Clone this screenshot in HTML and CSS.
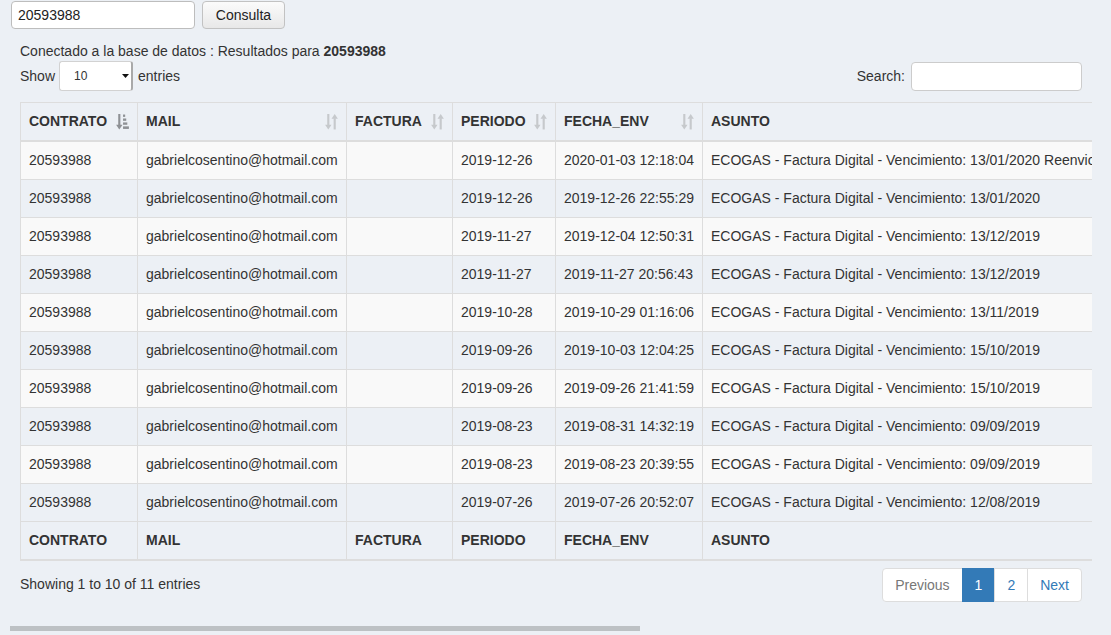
FILE: index.html
```html
<!DOCTYPE html>
<html lang="es">
<head>
<meta charset="utf-8">
<title>Consulta</title>
<link rel="stylesheet" href="styles.css">
</head>
<body>
<form class="topbar">
  <input class="query" type="text" value="20593988">
  <button class="btn" type="button">Consulta</button>
</form>
<div class="wrap">
  <div class="status">Conectado a la base de datos : Resultados para <b>20593988</b></div>
  <div class="controls">
    <div class="length">Show
      <span class="select"><span class="select-val">10</span><span class="select-arrow"><svg width="7" height="4" viewBox="0 0 7 4"><path d="M0 0h7L3.5 4z" fill="#111"/></svg></span></span>
      entries</div>
    <div class="filter">Search: <input class="search" type="text"></div>
  </div>
  <table class="grid">
    <colgroup>
      <col class="c1"><col class="c2"><col class="c3"><col class="c4"><col class="c5"><col class="c6">
    </colgroup>
    <thead>
      <tr>
        <th class="sortable">CONTRATO<svg class="sort asc" width="13" height="16" viewBox="0 0 12 15"><rect x="2" y="0" width="2" height="10.5"/><path d="M0 10h6l-3 4.5z"/><rect x="6.5" y="0.5" width="2" height="2.2"/><rect x="6.5" y="4.2" width="3" height="2.2"/><rect x="6.5" y="7.9" width="4" height="2.2"/><rect x="6.5" y="11.6" width="5.5" height="2.4"/></svg></th>
        <th class="sortable">MAIL<svg class="sort" width="13" height="16" viewBox="0 0 12 15"><rect x="2" y="0" width="2" height="10.5"/><path d="M0 10h6l-3 4.5z"/><path d="M6 4.5h6L9 0z"/><rect x="8" y="4" width="2" height="10.5"/></svg></th>
        <th class="sortable">FACTURA<svg class="sort" width="13" height="16" viewBox="0 0 12 15"><rect x="2" y="0" width="2" height="10.5"/><path d="M0 10h6l-3 4.5z"/><path d="M6 4.5h6L9 0z"/><rect x="8" y="4" width="2" height="10.5"/></svg></th>
        <th class="sortable">PERIODO<svg class="sort" width="13" height="16" viewBox="0 0 12 15"><rect x="2" y="0" width="2" height="10.5"/><path d="M0 10h6l-3 4.5z"/><path d="M6 4.5h6L9 0z"/><rect x="8" y="4" width="2" height="10.5"/></svg></th>
        <th class="sortable">FECHA_ENV<svg class="sort" width="13" height="16" viewBox="0 0 12 15"><rect x="2" y="0" width="2" height="10.5"/><path d="M0 10h6l-3 4.5z"/><path d="M6 4.5h6L9 0z"/><rect x="8" y="4" width="2" height="10.5"/></svg></th>
        <th class="sortable">ASUNTO<svg class="sort" width="13" height="16" viewBox="0 0 12 15"><rect x="2" y="0" width="2" height="10.5"/><path d="M0 10h6l-3 4.5z"/><path d="M6 4.5h6L9 0z"/><rect x="8" y="4" width="2" height="10.5"/></svg></th>
      </tr>
    </thead>
    <tbody>
      <tr><td>20593988</td><td>gabrielcosentino@hotmail.com</td><td></td><td>2019-12-26</td><td>2020-01-03 12:18:04</td><td>ECOGAS - Factura Digital - Vencimiento: 13/01/2020 Reenvio</td></tr>
      <tr><td>20593988</td><td>gabrielcosentino@hotmail.com</td><td></td><td>2019-12-26</td><td>2019-12-26 22:55:29</td><td>ECOGAS - Factura Digital - Vencimiento: 13/01/2020</td></tr>
      <tr><td>20593988</td><td>gabrielcosentino@hotmail.com</td><td></td><td>2019-11-27</td><td>2019-12-04 12:50:31</td><td>ECOGAS - Factura Digital - Vencimiento: 13/12/2019</td></tr>
      <tr><td>20593988</td><td>gabrielcosentino@hotmail.com</td><td></td><td>2019-11-27</td><td>2019-11-27 20:56:43</td><td>ECOGAS - Factura Digital - Vencimiento: 13/12/2019</td></tr>
      <tr><td>20593988</td><td>gabrielcosentino@hotmail.com</td><td></td><td>2019-10-28</td><td>2019-10-29 01:16:06</td><td>ECOGAS - Factura Digital - Vencimiento: 13/11/2019</td></tr>
      <tr><td>20593988</td><td>gabrielcosentino@hotmail.com</td><td></td><td>2019-09-26</td><td>2019-10-03 12:04:25</td><td>ECOGAS - Factura Digital - Vencimiento: 15/10/2019</td></tr>
      <tr><td>20593988</td><td>gabrielcosentino@hotmail.com</td><td></td><td>2019-09-26</td><td>2019-09-26 21:41:59</td><td>ECOGAS - Factura Digital - Vencimiento: 15/10/2019</td></tr>
      <tr><td>20593988</td><td>gabrielcosentino@hotmail.com</td><td></td><td>2019-08-23</td><td>2019-08-31 14:32:19</td><td>ECOGAS - Factura Digital - Vencimiento: 09/09/2019</td></tr>
      <tr><td>20593988</td><td>gabrielcosentino@hotmail.com</td><td></td><td>2019-08-23</td><td>2019-08-23 20:39:55</td><td>ECOGAS - Factura Digital - Vencimiento: 09/09/2019</td></tr>
      <tr><td>20593988</td><td>gabrielcosentino@hotmail.com</td><td></td><td>2019-07-26</td><td>2019-07-26 20:52:07</td><td>ECOGAS - Factura Digital - Vencimiento: 12/08/2019</td></tr>
    </tbody>
    <tfoot>
      <tr><th>CONTRATO</th><th>MAIL</th><th>FACTURA</th><th>PERIODO</th><th>FECHA_ENV</th><th>ASUNTO</th></tr>
    </tfoot>
  </table>
  <div class="bottom">
    <div class="info">Showing 1 to 10 of 11 entries</div>
    <ul class="pager">
      <li class="disabled"><a>Previous</a></li>
      <li class="active"><a>1</a></li>
      <li><a>2</a></li>
      <li><a>Next</a></li>
    </ul>
  </div>
</div>
<div class="hscroll"></div>
</body>
</html>
```
FILE: styles.css
```css
html, body {
  margin: 0;
  padding: 0;
}
body {
  background: #ecf0f5;
  font-family: "Liberation Sans", Arial, sans-serif;
  font-size: 14px;
  line-height: 20px;
  color: #333;
  overflow: hidden;
}
.topbar {
  display: flex;
  gap: 7px;
  padding: 1px 0 0 11px;
  margin: 0;
}
.query {
  box-sizing: border-box;
  width: 184px;
  height: 28px;
  border: 1px solid #bdbdbd;
  border-radius: 4px;
  background: #fff;
  padding: 0 6px;
  font: 14px "Liberation Sans", Arial, sans-serif;
  color: #222;
}
.btn {
  box-sizing: border-box;
  width: 83px;
  height: 28px;
  border: 1px solid #c2c2c2;
  border-radius: 4px;
  background: linear-gradient(#fbfbfb, #e8e8e8);
  font: 14px "Liberation Sans", Arial, sans-serif;
  color: #222;
  padding: 0;
}
.wrap {
  margin: 12px 19px 0 10px;
  padding: 0 10px;
  overflow: hidden;
}
.status {
  height: 20px;
}
.controls {
  display: flex;
  justify-content: space-between;
  align-items: center;
  height: 30px;
}
.length {
  display: flex;
  align-items: center;
}
.select {
  box-sizing: border-box;
  display: inline-flex;
  align-items: center;
  justify-content: space-between;
  width: 74px;
  height: 30px;
  margin: 0 5px 0 4px;
  background: #fff;
  border: 1px solid #d2d2d2;
  border-right: 2px solid #a9a9a9;
  border-radius: 3px;
  padding: 0 2px 0 14px;
  font-size: 12px;
}
.select-arrow {
  display: flex;
  align-items: center;
  height: 100%;
}
.filter {
  display: flex;
  align-items: center;
}
.search {
  box-sizing: border-box;
  width: 171px;
  height: 29px;
  margin-left: 6px;
  border: 1px solid #ccc;
  border-radius: 4px;
  background: #fff;
}
.grid {
  margin-top: 11px;
  border-collapse: collapse;
  table-layout: fixed;
  width: 1162px;
}
.c1 { width: 117px; }
.c2 { width: 209px; }
.c3 { width: 106px; }
.c4 { width: 103px; }
.c5 { width: 147px; }
.c6 { width: 480px; }
.grid th, .grid td {
  border: 1px solid #ddd;
  padding: 8px;
  line-height: 21px;
  text-align: left;
  white-space: nowrap;
  overflow: hidden;
}
.grid th {
  font-weight: bold;
}
.grid thead th {
  border-bottom-width: 2px;
  position: relative;
  padding-right: 28px;
}
.grid tfoot th {
  border-bottom-width: 2px;
}
.grid tbody tr:nth-child(odd) {
  background: #f9f9f9;
}
.sort {
  position: absolute;
  right: 8px;
  top: 11px;
  fill: #c6c9cc;
}
.sort.asc {
  fill: #8e9195;
}
.bottom {
  display: flex;
  justify-content: space-between;
  margin-top: 7px;
}
.info {
  padding-top: 6px;
}
.pager {
  display: flex;
  list-style: none;
  margin: 0;
  padding: 0;
}
.pager a {
  display: block;
  padding: 6px 12px;
  border: 1px solid #ddd;
  margin-left: -1px;
  background: #fff;
  color: #337ab7;
}
.pager li:first-child a {
  margin-left: 0;
  border-radius: 4px 0 0 4px;
}
.pager li:last-child a {
  border-radius: 0 4px 4px 0;
}
.pager .disabled a {
  color: #777;
}
.pager .active a {
  background: #337ab7;
  border-color: #337ab7;
  color: #fff;
}
.hscroll {
  margin: 24px 0 0 10px;
  width: 630px;
  height: 5px;
  background: #bdc1c4;
}
```
